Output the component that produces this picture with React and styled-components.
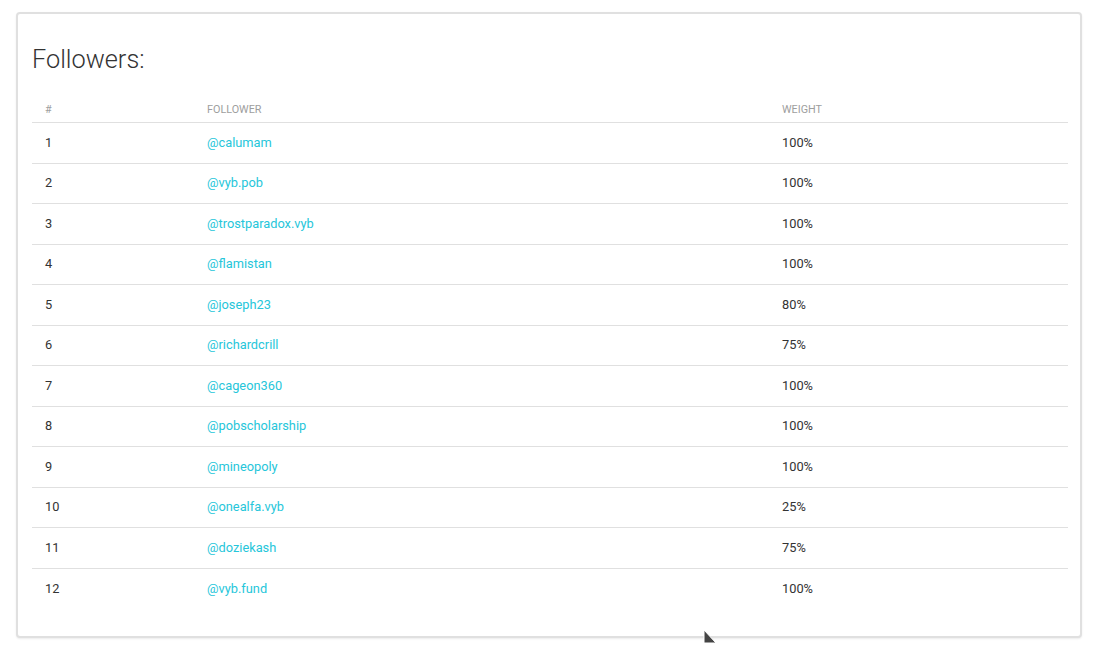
import React from 'react'
import styled, { createGlobalStyle } from 'styled-components'

const Global = createGlobalStyle`
    body {
        margin: 0;
        background: #fff;
        font-family: Roboto, 'Liberation Sans', sans-serif;
    }
`

const Page = styled.div`
    position: relative;
    padding: 12px 18px 12px 16px;
`

const Card = styled.div`
    border: 2px solid #e0e0e0;
    border-radius: 4px;
    box-shadow: 0 1px 2px rgba(0, 0, 0, 0.08);
    padding: 30px 12px 27px 14px;
    background: #fff;
`

const Title = styled.h2`
    margin: 0 0 17px 0;
    font-size: 25.3px;
    font-weight: 300;
    line-height: 31px;
    color: #333;
`

const Row = styled.div`
    display: grid;
    grid-template-columns: 162px 575px 1fr;
    align-items: ${p => (p.head ? 'end' : 'center')};
    height: ${p => (p.head ? '31px' : '40.5px')};
    box-sizing: border-box;
    border-bottom: ${p => (p.last ? 'none' : '1px solid #e0e0e0')};
    padding-bottom: ${p => (p.head ? '6px' : '0')};
`

const HeadCell = styled.div`
    padding-left: 13px;
    font-size: 10.8px;
    line-height: 12px;
    text-transform: uppercase;
    color: #9e9e9e;
`

const Cell = styled.div`
    padding-left: 13px;
    font-size: 12.8px;
    line-height: 20px;
    color: #333;
`

const Handle = styled.a`
    color: #26c6da;
    text-decoration: none;
    cursor: pointer;
`

const Pointer = styled.svg`
    position: absolute;
    left: 703px;
    top: 629px;
`

const followers = [
    ['calumam', '100%'],
    ['vyb.pob', '100%'],
    ['trostparadox.vyb', '100%'],
    ['flamistan', '100%'],
    ['joseph23', '80%'],
    ['richardcrill', '75%'],
    ['cageon360', '100%'],
    ['pobscholarship', '100%'],
    ['mineopoly', '100%'],
    ['onealfa.vyb', '25%'],
    ['doziekash', '75%'],
    ['vyb.fund', '100%'],
]

const App = () => (
    <Page>
        <Global />
        <Card>
            <Title>Followers:</Title>
            <Row head>
                <HeadCell>#</HeadCell>
                <HeadCell>Follower</HeadCell>
                <HeadCell>Weight</HeadCell>
            </Row>
            {followers.map(([name, weight], i) => (
                <Row key={name} last={i === followers.length - 1}>
                    <Cell>{i + 1}</Cell>
                    <Cell>
                        <Handle>@{name}</Handle>
                    </Cell>
                    <Cell>{weight}</Cell>
                </Row>
            ))}
        </Card>
        <Pointer width="14" height="16" viewBox="0 0 14 16">
            <polygon points="1,1 1,14 13,14" fill="#444" stroke="#fff" strokeWidth="1" />
        </Pointer>
    </Page>
)

export default App
